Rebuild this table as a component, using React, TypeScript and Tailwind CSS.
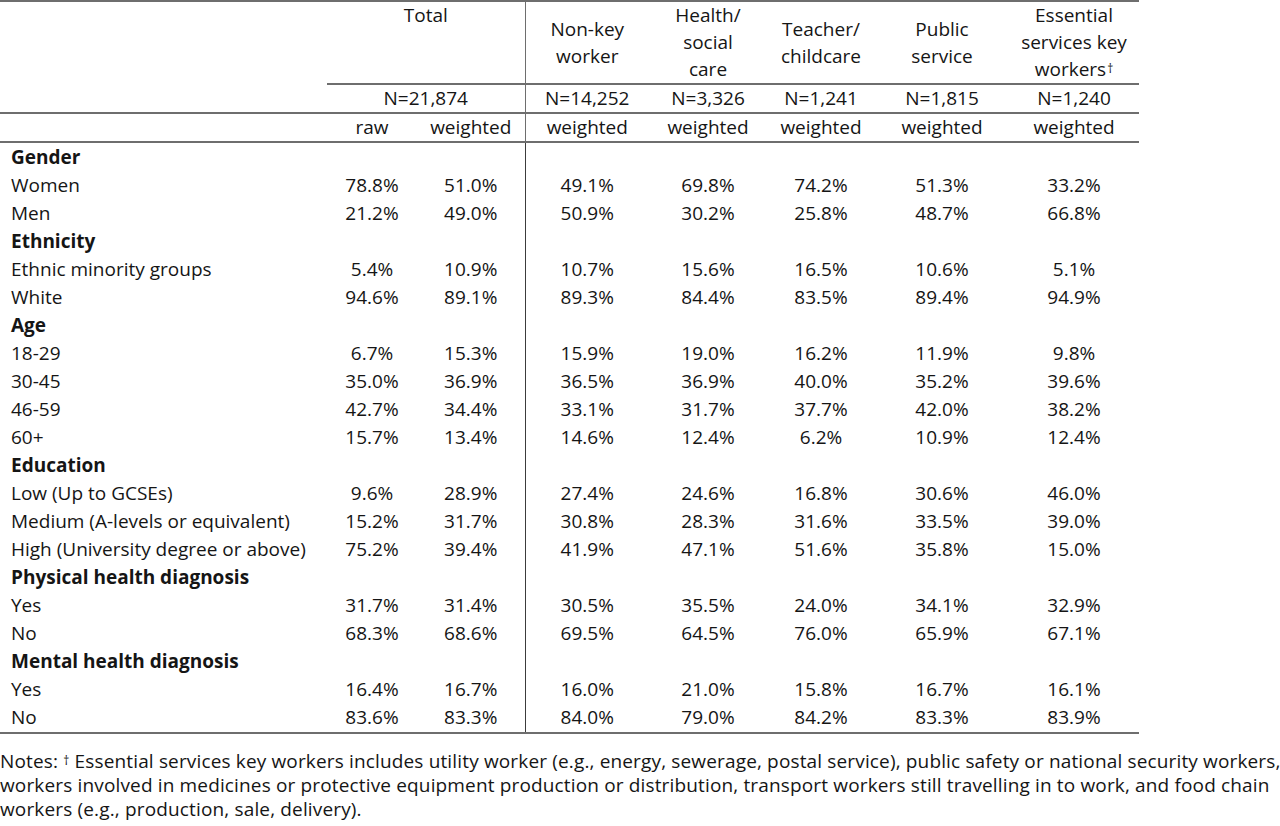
const groups: { title: string; rows: [string, string[]][] }[] = [
  {
    title: "Gender",
    rows: [
      ["Women", ["78.8%", "51.0%", "49.1%", "69.8%", "74.2%", "51.3%", "33.2%"]],
      ["Men", ["21.2%", "49.0%", "50.9%", "30.2%", "25.8%", "48.7%", "66.8%"]],
    ],
  },
  {
    title: "Ethnicity",
    rows: [
      ["Ethnic minority groups", ["5.4%", "10.9%", "10.7%", "15.6%", "16.5%", "10.6%", "5.1%"]],
      ["White", ["94.6%", "89.1%", "89.3%", "84.4%", "83.5%", "89.4%", "94.9%"]],
    ],
  },
  {
    title: "Age",
    rows: [
      ["18-29", ["6.7%", "15.3%", "15.9%", "19.0%", "16.2%", "11.9%", "9.8%"]],
      ["30-45", ["35.0%", "36.9%", "36.5%", "36.9%", "40.0%", "35.2%", "39.6%"]],
      ["46-59", ["42.7%", "34.4%", "33.1%", "31.7%", "37.7%", "42.0%", "38.2%"]],
      ["60+", ["15.7%", "13.4%", "14.6%", "12.4%", "6.2%", "10.9%", "12.4%"]],
    ],
  },
  {
    title: "Education",
    rows: [
      ["Low (Up to GCSEs)", ["9.6%", "28.9%", "27.4%", "24.6%", "16.8%", "30.6%", "46.0%"]],
      ["Medium (A-levels or equivalent)", ["15.2%", "31.7%", "30.8%", "28.3%", "31.6%", "33.5%", "39.0%"]],
      ["High (University degree or above)", ["75.2%", "39.4%", "41.9%", "47.1%", "51.6%", "35.8%", "15.0%"]],
    ],
  },
  {
    title: "Physical health diagnosis",
    rows: [
      ["Yes", ["31.7%", "31.4%", "30.5%", "35.5%", "24.0%", "34.1%", "32.9%"]],
      ["No", ["68.3%", "68.6%", "69.5%", "64.5%", "76.0%", "65.9%", "67.1%"]],
    ],
  },
  {
    title: "Mental health diagnosis",
    rows: [
      ["Yes", ["16.4%", "16.7%", "16.0%", "21.0%", "15.8%", "16.7%", "16.1%"]],
      ["No", ["83.6%", "83.3%", "84.0%", "79.0%", "84.2%", "83.3%", "83.9%"]],
    ],
  },
]

const sizes = ["N=14,252", "N=3,326", "N=1,241", "N=1,815", "N=1,240"]

const line = "border-b-2 border-[#6e6e6e]"
const divider = "border-r-[1.5px] border-[#3c3c3c]"

export default function App() {
  return (
    <div
      className="w-[1280px] h-[826px] overflow-hidden bg-white text-[#151515] text-[19px] leading-[27px]"
      style={{ fontFamily: "'Open Sans', 'Liberation Sans', sans-serif" }}
    >
      <table className="table-fixed border-collapse w-[1139px] border-t-2 border-[#6e6e6e]">
        <colgroup>
          <col className="w-[327px]" />
          <col className="w-[90px]" />
          <col className="w-[108px]" />
          <col className="w-[124px]" />
          <col className="w-[118px]" />
          <col className="w-[108px]" />
          <col className="w-[134px]" />
          <col className="w-[130px]" />
        </colgroup>
        <thead>
          {/* column titles */}
          <tr className="h-[81px]">
            <th className="p-0" />
            <th colSpan={2} className={`p-0 align-top font-normal text-center ${line} ${divider}`}>
              Total
            </th>
            <th className={`p-0 font-normal text-center ${line}`}>
              Non-key
              <br />
              worker
            </th>
            <th className={`p-0 font-normal text-center ${line}`}>
              Health/
              <br />
              social
              <br />
              care
            </th>
            <th className={`p-0 font-normal text-center ${line}`}>
              Teacher/
              <br />
              childcare
            </th>
            <th className={`p-0 font-normal text-center ${line}`}>
              Public
              <br />
              service
            </th>
            <th className={`p-0 font-normal text-center ${line}`}>
              Essential
              <br />
              services key
              <br />
              workers<sup className="text-[12px] leading-none relative -top-[3px] ml-[1px]">†</sup>
            </th>
          </tr>

          {/* sample sizes */}
          <tr className="h-[29px]">
            <th className={`p-0 ${line}`} />
            <th colSpan={2} className={`p-0 font-normal text-center ${line} ${divider}`}>
              N=21,874
            </th>
            {sizes.map((n) => (
              <th key={n} className={`p-0 font-normal text-center ${line}`}>
                {n}
              </th>
            ))}
          </tr>

          <tr className="h-[29px]">
            <th className={`p-0 ${line}`} />
            <th className={`p-0 font-normal text-center ${line}`}>raw</th>
            <th className={`p-0 font-normal text-center ${line} ${divider}`}>weighted</th>
            {sizes.map((n) => (
              <th key={n} className={`p-0 font-normal text-center ${line}`}>
                weighted
              </th>
            ))}
          </tr>
        </thead>

        <tbody className={line}>
          <tr className="h-[1px]">
            <td className="p-0" colSpan={2} />
            <td className={`p-0 ${divider}`} />
            <td className="p-0" colSpan={5} />
          </tr>
          {groups.map((g) => (
            <>
              <tr key={g.title} className="h-[28px]">
                <td className="p-0 pl-[11px] font-bold">{g.title}</td>
                <td className="p-0" />
                <td className={`p-0 ${divider}`} />
                <td className="p-0" colSpan={5} />
              </tr>
              {g.rows.map(([label, vals]) => (
                <tr key={g.title + label} className="h-[28px]">
                  <td className="p-0 pl-[11px] whitespace-nowrap">{label}</td>
                  {vals.map((v, i) => (
                    <td key={i} className={`p-0 text-center ${i === 1 ? divider : ""}`}>
                      {v}
                    </td>
                  ))}
                </tr>
              ))}
            </>
          ))}
          <tr className="h-[2px]">
            <td className="p-0" colSpan={2} />
            <td className={`p-0 ${divider}`} />
            <td className="p-0" colSpan={5} />
          </tr>
        </tbody>
      </table>

      {/* Notes */}
      <div className="mt-[15px] whitespace-nowrap tracking-[0.15px] leading-[24px]">
        <div>
          Notes: <sup className="text-[12px] leading-none relative -top-[3px]">†</sup> Essential services key workers
          includes utility worker (e.g., energy, sewerage, postal service), public safety or national security workers,
        </div>
        <div>
          workers involved in medicines or protective equipment production or distribution, transport workers still
          travelling in to work, and food chain
        </div>
        <div>workers (e.g., production, sale, delivery).</div>
      </div>
    </div>
  )
}
